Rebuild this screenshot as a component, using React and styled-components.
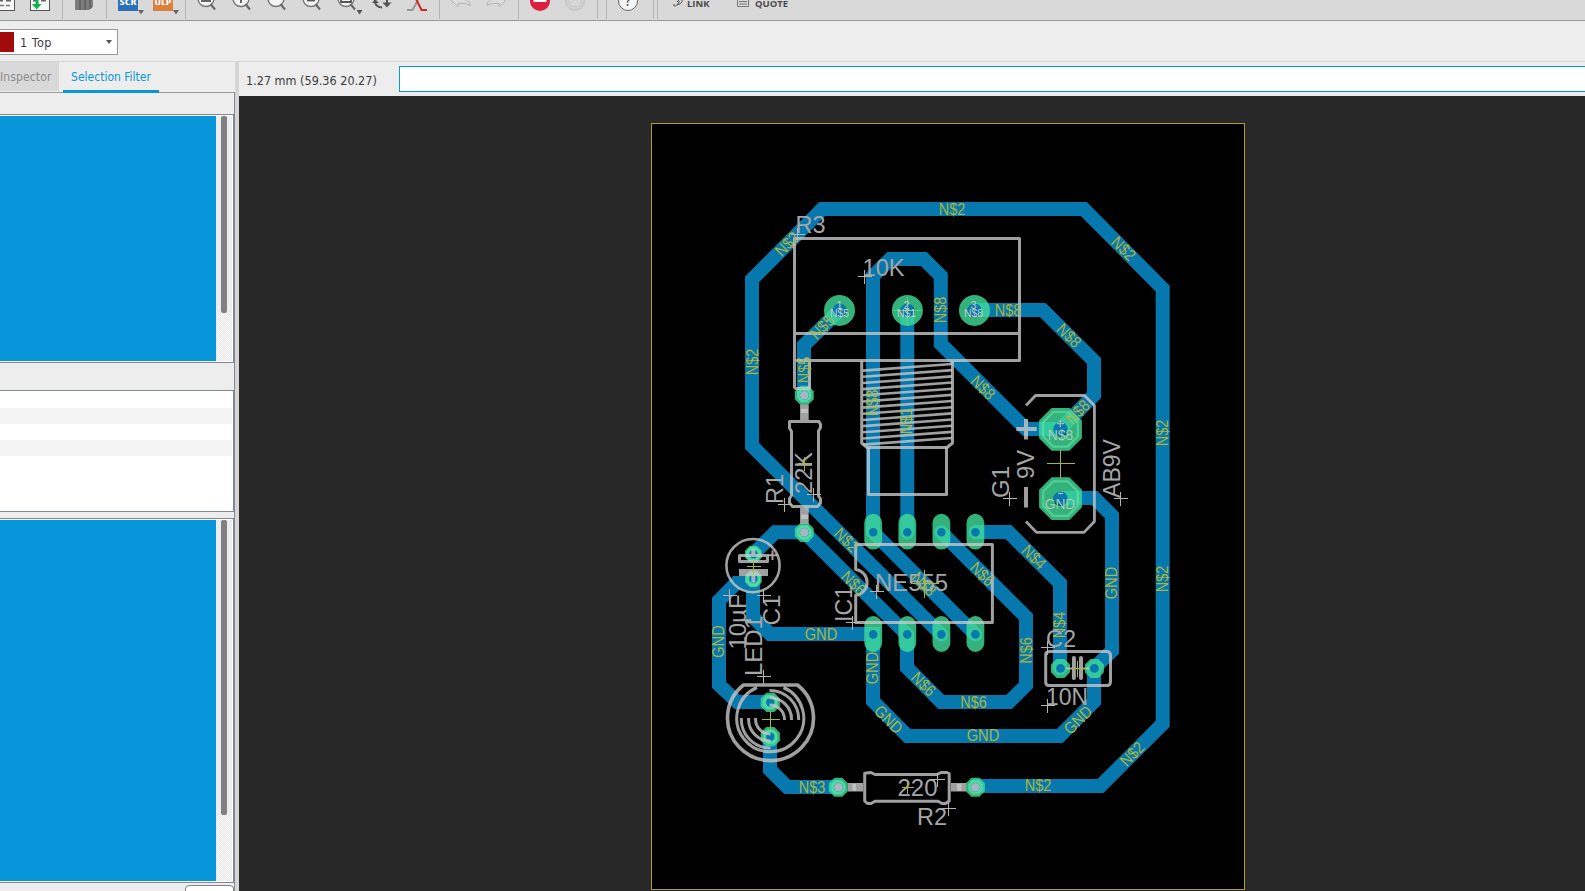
import React from "react";
import styled, { createGlobalStyle } from "styled-components";

const GlobalStyle = createGlobalStyle`
  html, body { margin: 0; padding: 0; overflow: hidden; background: #ededed; }
  * { box-sizing: border-box; }
`;

const UI_FONT = `"DejaVu Sans", "Noto Sans", sans-serif`;

const Window = styled.div`
  width: 1585px;
  height: 891px;
  display: flex;
  flex-direction: column;
  overflow: hidden;
  background: #ededed;
  font-family: ${UI_FONT};
  font-stretch: condensed;
  font-size: 12px;
  color: #3c3c3c;
`;

const Toolbar = styled.div`
  height: 21px;
  flex: none;
  display: flex;
  background: #d9d9d9;
  border-bottom: 1px solid #999;
  overflow: hidden;
`;

const Slot = styled.svg`
  flex: none;
  display: block;
  width: ${(p) => p.$w}px;
  height: 20px;
  margin-left: ${(p) => p.$gap || 0}px;
  overflow: visible;
`;

const Separator = styled.div`
  flex: none;
  width: 1px;
  height: 19px;
  margin-left: ${(p) => p.$gap}px;
  background: #b5b5b5;
`;

const ToolLabel = styled.span`
  flex: none;
  width: ${(p) => p.$w}px;
  margin-left: ${(p) => p.$gap}px;
  margin-top: -2px;
  font: 700 9.5px/12px "Open Sans", sans-serif;
  color: #4a4a4a;
  white-space: nowrap;
`;

const LayerBar = styled.div`
  height: 41px;
  flex: none;
  display: flex;
  align-items: flex-start;
  padding-top: 8px;
  border-bottom: 1px solid #d4d4d4;
`;

const LayerSelect = styled.div`
  width: 118px;
  height: 26px;
  display: flex;
  align-items: center;
  background: #fff;
  border: 1px solid #999;
  border-left: 0;
  font-size: 12.5px;
`;

const Swatch = styled.div`
  width: 14px;
  height: 20px;
  background: #a30a0c;
  margin-right: 6px;
`;

const LayerName = styled.span`
  flex: 1;
  letter-spacing: 0.5px;
`;

const Caret = styled.span`
  width: 0;
  height: 0;
  margin-right: 5px;
  border: 3px solid transparent;
  border-top: 4px solid #555;
  border-bottom: 0;
`;

const Workspace = styled.div`
  flex: 1;
  min-height: 0;
  display: flex;
`;

const SidePanel = styled.div`
  width: 235px;
  flex: none;
  display: flex;
  flex-direction: column;
`;

const Tabs = styled.div`
  height: 30px;
  flex: none;
  display: flex;
  margin-bottom: -1px;
`;

const Tab = styled.div`
  height: 29px;
  line-height: 30px;
  width: 59px;
  letter-spacing: 0.12px;
  color: #8b8b8b;
  background: #d9d9d9;
  white-space: nowrap;
`;

const ActiveTab = styled.div`
  width: 96px;
  height: 31px;
  margin-left: 4px;
  text-align: center;
  line-height: 30px;
  color: #0896da;
  border-bottom: 3px solid #0896da;
  white-space: nowrap;
  z-index: 1;
`;

const Panels = styled.div`
  flex: 1;
  min-height: 0;
  margin-top: 1px;
  display: flex;
  flex-direction: column;
  border-top: 1px solid #999;
  border-right: 1px solid #808894;
`;

const Strip = styled.div`
  flex: none;
  height: ${(p) => p.$h}px;
`;

const List = styled.div`
  flex: none;
  height: ${(p) => p.$h}px;
  display: flex;
  padding: 1px 1px 1px 0;
  background: #fff;
  border: 1px solid #808894;
  border-left: 0;
`;

const SelectedRows = styled.div`
  width: 216px;
  background: #0896da;
`;

const ScrollTrack = styled.div`
  width: 16px;
  background: repeating-conic-gradient(#e4e4e4 0 25%, #fff 0 50%) 0 0 / 2px 2px;
`;

const ScrollArea = styled.div`
  height: ${(p) => p.$h}px;
  padding-left: 5px;
  background: #ededed;
`;

const ScrollThumb = styled.div`
  width: 6px;
  height: 100%;
  border-radius: 2px;
  background: #808080;
`;

const Table = styled(List)`
  flex-direction: column;
  padding: 1px 1px 0 0;
`;

const TableRow = styled.div`
  height: 16px;
  background: ${(p) => (p.$alt ? "#f4f4f4" : "#fff")};
`;

const Footer = styled.div`
  flex: 1;
  display: flex;
  justify-content: flex-end;
  padding-top: 2px;
`;

const FooterButton = styled.div`
  width: 49px;
  height: 20px;
  background: #fff;
  border: 1px solid #808080;
  border-radius: 4px;
`;

const Splitter = styled.div`
  width: 4px;
  flex: none;
  background: #d6d6d6;
`;

const Editor = styled.div`
  flex: 1;
  min-width: 0;
  display: flex;
  flex-direction: column;
`;

const CommandBar = styled.div`
  height: 34px;
  flex: none;
  display: flex;
  align-items: center;
`;

const Coordinates = styled.div`
  width: 160px;
  padding: 2px 0 0 7px;
  white-space: nowrap;
  font-size: 12.5px;
`;

const CommandInput = styled.div`
  flex: 1;
  height: 26px;
  background: #fff;
  border: 1px solid #0896da;
  border-right: 0;
`;

const BoardCanvas = styled.svg`
  display: block;
  width: 1346px;
  height: 795px;
  background: #282828;
`;

const Trace = styled.path`
  fill: none;
  stroke: #0678ad;
  stroke-width: 14;
  stroke-linecap: round;
  stroke-linejoin: miter;
`;

const Silk = styled.path`
  fill: none;
  stroke: #c8c8c8;
  stroke-opacity: 0.8;
  stroke-width: ${(p) => p.$w || 3};
  stroke-linejoin: round;
  stroke-linecap: ${(p) => p.$cap || "butt"};
`;

const Cross = styled.path`
  fill: none;
  stroke: ${(p) => (p.$origin ? "#a9b82c" : "#b4b4b4")};
  stroke-width: 1;
  shape-rendering: crispEdges;
`;

const Pad = styled.path`
  fill: #40de9a;
  fill-opacity: 0.8;
  fill-rule: evenodd;
`;

const PadRing = styled.path`
  fill: none;
  stroke: #6ff0b0;
  stroke-opacity: 0.5;
  stroke-width: 2.2;
`;

const NetText = styled.text`
  font-family: "Liberation Sans", sans-serif;
  font-size: ${(p) => p.$size}px;
  fill: ${(p) => p.$color};
  text-anchor: middle;
`;

const TRACES = [
  "M941.3 634.6L752 445.8V279.4L822.2 209H1083.8L1162.7 288.6V723.8L1100.5 786H975.5",
  "M975.5 634.6L873 532V276L890.2 259H923.8L940.8 276V343.8L1026 429H1060.3L1094 395.1V361L1042.8 310H974.5",
  "M907.3 310V532.3",
  "M941.3 532.3L1026 617V685.1L1009 702H941.2L907 667.6V634.6L804.3 532.3H775.2L753.3 554",
  "M753 579V617L770 634H873V701.2L907.6 736H1059.8L1094 701.7V668.3L1112 650.8V515.6L1094.4 498H1060.3",
  "M753 583H736.2L719 600.6V684.8L737.2 702H770.3",
  "M770 736.7V769.8L787.2 787H838",
  "M975.5 532H1008.4L1060 583.2V668.3",
  "M839.5 310.3L804 345.2V395",
];

// text, centre x, centre y, rotation
const NETS = [
  ["N$2", 952, 209, 0], ["N$2", 787, 244, -45], ["N$2", 752, 362, -90],
  ["N$2", 1123.5, 248.5, 45], ["N$2", 1162, 433, -90], ["N$2", 1162, 579, -90],
  ["N$2", 1132, 754, -45], ["N$2", 1038, 785.5, 0], ["N$2", 846.5, 540, 45],
  ["N$8", 940, 310, -90], ["N$8", 1008, 310, 0], ["N$8", 1069, 335.5, 45],
  ["N$8", 983, 387.5, 45], ["N$8", 1077.5, 412, -45], ["N$8", 872, 403, -90],
  ["N$8", 924, 584, 45], ["N$1", 906, 421, -90], ["N$5", 822, 327, -45],
  ["N$5", 804, 370, -90], ["N$6", 982.3, 574, 45], ["N$6", 1026, 650.5, -90],
  ["N$6", 973.5, 702, 0], ["N$6", 923.5, 684, 45], ["N$6", 853.5, 583, 45],
  ["N$4", 1034, 557, 45], ["N$4", 1059.5, 625, -90], ["N$3", 812, 787, 0],
  ["GND", 1111, 583, -90], ["GND", 821, 634, 0], ["GND", 872, 668, -90],
  ["GND", 718, 641.5, -90], ["GND", 983, 735.5, 0], ["GND", 888.5, 719.5, 45],
  ["GND", 1078, 720, -45],
];

// text, centre x, centre y, rotation, length
const NAMES = [
  ["R3", 810.5, 224.5, 0, 30], ["10K", 883.5, 267.5, 0, 42], ["R1", 774.5, 489, -90, 30],
  ["22K", 803.5, 473, -90, 42], ["G1", 1000.5, 482, -90, 32], ["9V", 1025.5, 464.5, -90, 29],
  ["AB9V", 1111.5, 468.5, -90, 59], ["NE555", 911.5, 582.5, 0, 73], ["IC1", 843.5, 604, -90, 36],
  ["C1", 771.5, 610, -90, 31], ["10µF", 738, 622, -90, 55], ["LED1", 753.5, 646, -90, 60],
  ["C2", 1061, 638.5, 0, 30], ["10N", 1067, 696.5, 0, 42], ["R2", 932, 816.5, 0, 30],
  ["220", 917.5, 787.5, 0, 40],
];

const MARKS = [
  [797.5, 234.5], [864.5, 276.5], [784.5, 504.5], [813.5, 494.5], [1009.5, 498.5],
  [1120.5, 498.5], [729.5, 595.5], [763.5, 595.5], [876.5, 591.5], [852.5, 622.5],
  [763.5, 676.5], [1047.5, 647.5], [1047.5, 705.5], [937.5, 779.5], [948.5, 808.5],
];

const ORIGINS = [
  [804.5, 463.5, 7], [753.5, 566.5, 7], [770.5, 719.5, 9], [907.5, 787.5, 6],
  [924.5, 583.5, 14], [1077.5, 668.5, 8], [1060.5, 463.5, 14],
];

const cross = (x, y, r) => `M${x - r} ${y}h${2 * r}M${x} ${y - r}v${2 * r}`;
const circle = (x, y, r) => `M${x - r} ${y}a${r} ${r} 0 1 0 ${2 * r} 0a${r} ${r} 0 1 0 ${-2 * r} 0Z`;
const octagon = (x, y, r) => {
  const k = r * 0.414;
  return `M${x - k} ${y - r}H${x + k}L${x + r} ${y - k}V${y + k}L${x + k} ${y + r}H${x - k}L${x - r} ${y + k}V${y - k}Z`;
};
const oblong = (x, y) => `M${x - 8.9} ${y - 9}a8.9 8.9 0 0 1 17.8 0v18a8.9 8.9 0 0 1 -17.8 0Z`;

const PIN_X = [873.2, 907.3, 941.4, 975.4];
const SMALL_PADS = [
  [804.3, 395.3, 1], [804.3, 532.4, 1], [838.4, 787.3, 1], [975.4, 787.3, 1],
  [1060.5, 668.4], [1094.4, 668.4],
];
const VIAS = [[753.4, 554.2, 8.4], [753.4, 578.8, 8.4], [770.3, 702.4, 9.6], [770.3, 736.7, 9.6]];

const THREADS = Array.from({ length: 13 }, (_, i) => {
  const y = 370.6 + i * 6.17;
  return `M863 ${y}L952 ${y - 6.6}`;
}).join("");

function Label({ text, x, y, rot, length, size, color }) {
  return (
    <NetText
      $size={size}
      $color={color}
      transform={`translate(${x} ${y}) rotate(${rot})`}
      y={size * 0.345}
      textLength={length}
      lengthAdjust="spacingAndGlyphs"
    >
      {text}
    </NetText>
  );
}

function Board() {
  return (
    <BoardCanvas viewBox="239 96 1346 795">
      <rect x="651.5" y="123.5" width="593" height="766" fill="#000" stroke="#b8953a" />
      {TRACES.map((d) => <Trace key={d} d={d} />)}

      {PIN_X.map((x) => (
        <React.Fragment key={x}>
          <Pad d={oblong(x, 531.7) + circle(x, 532.3, 4.3)} />
          <Pad d={oblong(x, 634) + circle(x, 634.4, 4.3)} />
        </React.Fragment>
      ))}
      {[839.5, 907.4, 974.5].map((x) => <Pad key={x} d={circle(x, 310.4, 15.5) + circle(x, 310.4, 7)} />)}
      {SMALL_PADS.map(([x, y, lead]) => (
        <React.Fragment key={`${x}-${y}`}>
          <Pad d={octagon(x, y, 9.5) + circle(x, y, 4.4)} />
          {lead && <PadRing d={octagon(x, y, 6)} />}
          {lead && <circle cx={x} cy={y} r="4.4" fill="#a7b7c4" />}
        </React.Fragment>
      ))}
      {VIAS.map(([x, y, r]) => (
        <React.Fragment key={y}>
          <Pad d={octagon(x, y, r) + circle(x, y, 4)} />
          <PadRing d={octagon(x, y, 6)} />
        </React.Fragment>
      ))}
      {[429.3, 498.6].map((y) => (
        <React.Fragment key={y}>
          <Pad d={octagon(1060.5, y, 21.4) + circle(1060.5, y, 7.2)} />
          <PadRing d={octagon(1060.5, y, 17.3)} />
        </React.Fragment>
      ))}

      <Silk d="M794.5 388.5V238.5H1019.5V360.5H794.5M794.5 333.5H1019.5M794.5 388.5H809.5V361" />
      <Silk d="M861.7 361V443L867 447.5H947L952.5 443V361" />
      <Silk $w={2.6} d={THREADS} />
      <Silk d="M868.5 447.5V494.5H946.5V447.5" />
      <Silk d="M789.5 421.5H819L820.5 424.5V427.5L818.5 431V496L820.5 499V503L817.5 506.5H792.5L789.5 503V498.5L791.5 495.5V431.5L789.5 428Z" />
      <Silk $w={8.6} d="M804.4 404.5V420M804.4 508V523.5" />
      <Silk $w={7} d="M804.4 409V413M804.4 514.5V519" />
      <Silk d="M864.7 773.3L871 772.5L875 774.5H937L941 772.5H947L949.2 773.5V801L945.5 803.5H942L938 801.3H875L871 803.5H867.5L864.7 801Z" />
      <Silk $w={8.6} d="M848 787.3H863M951 787.3H966" />
      <Silk $w={7} d="M852.5 787.3H856M957 787.3H961.5" />
      <Silk $w={2.6} d={circle(753, 565.6, 26.6)} />
      <Silk d="M739.5 555.5H767.5V561.5H739.5Z" />
      <Silk $w={7} d="M739 572.5H768" />
      <Silk $w={4} d="M753.3 549V554.5M753.3 574.5V582.5" />
      <Silk $w={2} d="M768 555.3H777M772.5 550.5V560" />
      <Silk d="M855.7 544.5H992.4V622.4H855.7V595.3A13 13 0 0 0 855.7 569.5Z" />
      <Silk $w={2.8} d="M1026 405.5L1035.5 395.5H1084.5L1094.4 405.5V521.5L1084 532.4H1036.5L1026 521.5" />
      <Silk $w={4} d="M1016.3 429H1036.7M1026 419V439.5M1026 487V507.5" />
      <Silk d="M1050 651.5H1107Q1110.5 652 1110.5 655.5V681.5Q1110.5 685.5 1107 685.5H1049Q1045.7 685.5 1045.7 682V654.5Q1045.7 651.5 1050 651.5Z" />
      <Silk $w={4} $cap="round" d="M1073.9 658V678M1081 658V678" />
      <Silk $w={2} d="M1066 668.4H1073M1082 668.4H1089" />
      <Silk $w={3.6} d="M743.5 685H797.5A43 42.500 0 1 1 743.5 685Z" />
      <Silk d="M757 687.5A33.5 33.5 0 1 0 783.5 687.5" />
      <Silk d="M769.5 690.4A29 29 0 0 1 798.7 720M769.5 697.8A21.5 21.5 0 0 1 791.5 720M769.5 705A14.5 14.5 0 0 1 784.5 720M741.3 718A29 29 0 0 0 770.5 748M748.7 718A21.5 21.5 0 0 0 770.5 741M755.7 718A14.5 14.5 0 0 0 770.5 734" />

      {NETS.map(([text, x, y, rot]) => (
        <Label key={`${x}-${y}`} text={text} x={x} y={y} rot={rot} size={16.5} color="#a9b63e" length={text === "GND" ? 32.5 : 26.5} />
      ))}
      {NAMES.map(([text, x, y, rot, length]) => (
        <Label key={text} text={text} x={x} y={y} rot={rot} length={length} size={24} color="#a4a6a8" />
      ))}
      {MARKS.map(([x, y]) => <Cross key={`${x}-${y}`} d={cross(x, y, 7)} />)}
      {ORIGINS.map(([x, y, r]) => <Cross key={`${x}-${y}`} $origin d={cross(x, y, r)} />)}
      <path d={cross(907.5, 310.5, 14)} stroke="#5fd070" fill="none" shapeRendering="crispEdges" />

      {[["1", "N$5", 839.5], ["2", "N$1", 906.5], ["3", "N$8", 973.5]].map(([n, net, x]) => (
        <React.Fragment key={n}>
          <Label text={n} x={x} y={305.5} rot={0} size={10.5} color="#c6ccd0" length={6} />
          <Label text={net} x={x} y={313.8} rot={0} size={10.5} color="#c6ccd0" length={19} />
        </React.Fragment>
      ))}
      <Label text="N$8" x={1060.5} y={435} rot={0} size={15} color="#a9cdbb" length={25.5} />
      <Label text="GND" x={1060} y={504.2} rot={0} size={15} color="#a9cdbb" length={30.5} />
      <Silk $w={1.3} d="M1057 423.5h7M1060.3 420v7M1058 493.5h5" />
    </BoardCanvas>
  );
}

const Lens = ({ gap, w = 19, mark }) => (
  <Slot $w={w} $gap={gap} viewBox={`0 0 ${w} 20`}>
    <circle cx="9" cy="-1.5" r="8" fill="#f4f4f4" stroke="#777" strokeWidth="1.4" />
    <path d="M13.5 4L18 9.5" stroke="#666" strokeWidth="2" />
    {mark && <path d={mark} stroke="#555" strokeWidth="1.8" fill="none" />}
    {w > 19 && <path d="M19.5 10h6l-3 4.5Z" fill="#555" />}
  </Slot>
);

const Badge = ({ gap, color, text }) => (
  <Slot $w={26} $gap={gap} viewBox="0 0 26 20">
    <rect y="-9" width="20" height="20" fill={color} />
    <text x="10" y="4.5" textAnchor="middle" textLength="17" lengthAdjust="spacingAndGlyphs" fontFamily="Open Sans, sans-serif" fontWeight="700" fontSize="9.5" fill="#fff">{text}</text>
    <path d="M20 10h6l-3 4.5Z" fill="#666" />
  </Slot>
);

const BoardIcon = ({ gap, w, children }) => (
  <Slot $w={w} $gap={gap} viewBox={`${20 - w} 0 ${w} 20`}>
    <rect x="0.5" y="-8.5" width="19" height="19" fill="#f8f8f8" stroke="#555" />
    <path d="M3 0.5h5M11 0.5h5" stroke="#666" strokeWidth="2" />
    {children}
  </Slot>
);

function TopToolbar() {
  return (
    <Toolbar>
      <BoardIcon w={15}><path d="M5 5.5h4M11 5.5h4" stroke="#777" strokeWidth="1.5" /></BoardIcon>
      <BoardIcon w={20} gap={15}><path d="M5.500 0V4H2L6.700 9.500L11.500 4H8.500V0Z" fill="#0db14b" /></BoardIcon>
      <Separator $gap={12} />
      <Slot $w={18} $gap={12} viewBox="0 0 18 20">
        <path d="M0 -2H15L18 -4V7L14 10H0Z" fill="#7d7d7d" />
        <path d="M5 0V10M10 0V10M15 -2V9" stroke="#4e4e4e" />
      </Slot>
      <Separator $gap={13} />
      <Badge gap={11} color="#2b70b8" text="SCR" />
      <Badge gap={9} color="#dc803e" text="ULP" />
      <Separator $gap={6} />
      <Lens gap={11} mark="M4 1H14" />
      <Lens gap={16} mark="M9 -4V3" />
      <Lens gap={16} />
      <Lens gap={16} mark="M5 0.5H13" />
      <Lens gap={16} w={26} mark="M4 2V-1H14V2Z" />
      <Slot $w={19} $gap={9} viewBox="0 0 19 20">
        <path d="M3 1Q3 7 10 7.5M15 0V4" stroke="#555" strokeWidth="2" fill="none" />
        <path d="M0 3L3 -1L7 3ZM10.500 2.500H19.500L15 7.500Z" fill="#555" />
      </Slot>
      <Slot $w={20} $gap={16} viewBox="0 0 20 20">
        <path d="M0 10H5.500L11 0" stroke="#999" strokeWidth="2" fill="none" />
        <path d="M8.500 -2L14.500 10H20" stroke="#d4281f" strokeWidth="2" fill="none" />
      </Slot>
      <Separator $gap={12} />
      <Slot $w={20} $gap={11} viewBox="0 0 20 20">
        <path d="M7 -4L0.500 1L7 6.500V3.500Q14 2 19.500 5.500Q18 -2 7 -1Z" fill="#dedede" stroke="#b5b5b5" />
      </Slot>
      <Slot $w={20} $gap={15} viewBox="0 0 20 20">
        <path d="M13 -4L19.500 1L13 6.500V3.500Q6 2 0.500 5.500Q2 -2 13 -1Z" fill="#dedede" stroke="#b5b5b5" />
      </Slot>
      <Separator $gap={12} />
      <Slot $w={20} $gap={11} viewBox="0 0 20 20">
        <circle cx="10" cy="1" r="10" fill="#dc1f3d" /><rect x="3.500" y="-2" width="13" height="4" fill="#fff" />
      </Slot>
      <Slot $w={20} $gap={15} viewBox="0 0 20 20">
        <circle cx="10" cy="1" r="9.500" fill="#cfcfcf" stroke="#c3c3c3" />
        <text x="10" y="4.500" textAnchor="middle" fontFamily="Open Sans, sans-serif" fontSize="8.500" fill="#e6e6e6">GO</text>
      </Slot>
      <Separator $gap={12} />
      <Separator $gap={8} />
      <Slot $w={20} $gap={11} viewBox="0 0 20 20">
        <circle cx="10" cy="1" r="9.500" fill="#f6f6f6" stroke="#666" />
        <text x="10" y="6" textAnchor="middle" fontFamily="Open Sans, sans-serif" fontWeight="600" fontSize="14" fill="#555">?</text>
      </Slot>
      <Separator $gap={15} />
      <Separator $gap={3} />
      <Slot $w={10} $gap={15} viewBox="0 0 10 20">
        <path d="M1 4Q0 6.500 2.500 6Q5 5 6.500 1M4 2Q6 -1 8.500 -1Q10.500 1 7.500 3.500L4.500 5" stroke="#555" fill="none" />
      </Slot>
      <ToolLabel $gap={4} $w={22}>LINK</ToolLabel>
      <Slot $w={12} $gap={28} viewBox="0 0 12 20">
        <path d="M0.500 -3V6.500H11.500V-3M2 1.500H10M2 4H10" stroke="#777" fill="none" />
      </Slot>
      <ToolLabel $gap={6} $w={40}>QUOTE</ToolLabel>
    </Toolbar>
  );
}

function ScrollList({ height, thumb }) {
  return (
    <List $h={height}>
      <SelectedRows />
      <ScrollTrack>
        <ScrollArea $h={thumb}><ScrollThumb /></ScrollArea>
      </ScrollTrack>
    </List>
  );
}

export default function App() {
  return (
    <Window>
      <GlobalStyle />
      <TopToolbar />
      <LayerBar>
        <LayerSelect>
          <Swatch />
          <LayerName>1 Top</LayerName>
          <Caret />
        </LayerSelect>
      </LayerBar>
      <Workspace>
        <SidePanel>
          <Tabs>
            <Tab>Inspector</Tab>
            <ActiveTab>Selection Filter</ActiveTab>
          </Tabs>
          <Panels>
            <Strip $h={21} />
            <ScrollList height={249} thumb={197} />
            <Strip $h={27} />
            <Table $h={122}>
              <TableRow /><TableRow $alt /><TableRow /><TableRow $alt />
            </Table>
            <Strip $h={6} />
            <ScrollList height={365} thumb={295} />
            <Footer><FooterButton /></Footer>
          </Panels>
        </SidePanel>
        <Splitter />
        <Editor>
          <CommandBar>
            <Coordinates>1.27 mm (59.36 20.27)</Coordinates>
            <CommandInput />
          </CommandBar>
          <Board />
        </Editor>
      </Workspace>
    </Window>
  );
}
